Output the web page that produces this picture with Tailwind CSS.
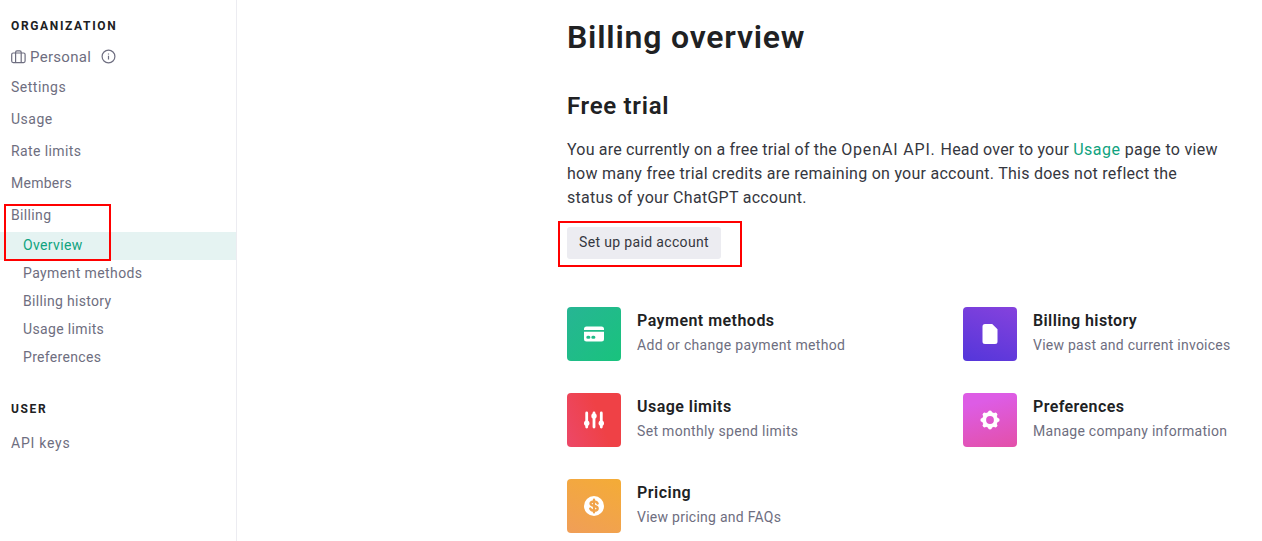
<!DOCTYPE html>
<html lang="en">
<head>
<meta charset="utf-8">
<title>Billing overview</title>
<script src="https://cdn.jsdelivr.net/npm/@tailwindcss/browser@4"></script>
</head>
<body class="relative flex h-[541px] w-[1262px] overflow-hidden bg-white font-['Roboto',sans-serif] text-[#353740]">
  <nav class="h-full w-[237px] shrink-0 border-r border-[#ececf1] pt-[17px] text-sm text-[#6e6e80]">
    <h3 class="pl-[11px] text-xs leading-[18px] font-bold tracking-[1.65px] text-[#202123]">ORGANIZATION</h3>
    <div class="mt-3 flex h-5 items-center pl-[11px] text-[15px]">
      <svg class="-mt-0.5 size-[15px]" viewBox="0 0 15 15" fill="none" stroke="currentColor" stroke-width="1.2"><rect x=".7" y="4" width="13.4" height="9.6" rx="1.5"/><path d="M4.6 13.6V3.2q0-1.4 1.4-1.4h2.8q1.4 0 1.4 1.4v10.4"/></svg>
      <span class="mt-0.5 ml-1 tracking-[0.3px]">Personal</span>
      <svg class="-mt-0.5 ml-[10px] size-[15px]" viewBox="0 0 15 15" fill="none" stroke="currentColor" stroke-width="1.2"><circle cx="7.5" cy="7.5" r="6.4"/><path d="M7.5 6.8v3.6M7.5 4.4v1.2"/></svg>
    </div>
    <ul class="mt-1 pl-[11px] leading-8">
      <li class="tracking-[0.5px]">Settings</li>
      <li class="tracking-[0.5px]">Usage</li>
      <li class="tracking-[0.4px]">Rate limits</li>
      <li class="tracking-[0.25px]">Members</li>
      <li class="tracking-[0.35px]">Billing</li>
    </ul>
    <ul class="mt-px leading-[26px]">
      <li class="bg-[#e5f3f2] pb-0.5 pl-[23px] tracking-[0.35px] text-[#10a37f]">Overview</li>
      <li class="pb-0.5 pl-[23px] tracking-[0.4px]">Payment methods</li>
      <li class="pb-0.5 pl-[23px] tracking-[0.32px]">Billing history</li>
      <li class="pb-0.5 pl-[23px] tracking-[0.35px]">Usage limits</li>
      <li class="pb-0.5 pl-[23px] tracking-[0.32px]">Preferences</li>
    </ul>
    <h3 class="mt-7 pl-[11px] text-xs leading-[18px] font-bold tracking-[1.65px] text-[#202123]">USER</h3>
    <div class="mt-[9px] pl-[11px] leading-8 tracking-[0.75px]">API keys</div>
  </nav>

  <main class="ml-[330px] w-[695px] shrink-0 pt-[17px]">
    <h1 class="text-[32px] leading-10 font-semibold tracking-[0.8px] text-[#202123]">Billing overview</h1>
    <h2 class="mt-[33px] text-2xl leading-8 font-semibold tracking-[0.7px] text-[#202123]">Free trial</h2>
    <p class="mt-4 text-base leading-6 whitespace-nowrap"><span class="tracking-[0.2px]">You are currently on a free trial of the </span><span class="tracking-[0.85px]">OpenAI API. </span><span class="tracking-[0.2px]">Head over to your </span><a class="tracking-[0.5px] text-[#10a37f]">Usage</a><span class="tracking-[0.3px]"> page to view</span><br><span class="tracking-[0.26px]">how many free trial credits are remaining on your account. This does not reflect the</span><br><span class="tracking-[0.28px]">status of your ChatGPT account.</span></p>
    <button class="mt-[17px] flex h-8 w-[154px] items-center justify-center rounded-[3px] bg-[#ececf1] pb-0.5 text-sm tracking-[0.35px]">Set up paid account</button>

    <div class="mt-12 grid grid-cols-[396px_299px] gap-y-8">
      <section class="flex h-[54px] gap-4">
        <div class="flex size-[54px] items-center justify-center rounded bg-linear-[135deg,#27b594,#19c37d]">
          <svg class="size-5" viewBox="0 0 20 20" fill="#fff"><path d="M0 5a2.5 2.5 0 0 1 2.5-2.5h15A2.5 2.5 0 0 1 20 5v.9H0zM0 7.7h20V15a2.5 2.5 0 0 1-2.5 2.5h-15A2.5 2.5 0 0 1 0 15zm3.8 4.1a1.5 1.5 0 0 0 0 3h1.1a1.5 1.5 0 0 0 0-3zm5 0a1.5 1.5 0 0 0 0 3h1.1a1.5 1.5 0 0 0 0-3z"/></svg>
        </div>
        <div><h4 class="mt-0.5 leading-6 font-semibold tracking-[0.47px] text-[#202123]">Payment methods</h4><p class="text-sm leading-6 tracking-[0.33px] text-[#6e6e80]">Add or change payment method</p></div>
      </section>
      <section class="flex h-[54px] gap-4">
        <div class="flex size-[54px] items-center justify-center rounded bg-linear-[200deg,#8542dd,#5436da]">
          <svg class="size-5" viewBox="0 0 20 20" fill="#fff"><path d="M5 0h7.2l5.3 5.3V17.5a2.5 2.5 0 0 1-2.5 2.5H5a2.5 2.5 0 0 1-2.5-2.5v-15A2.5 2.5 0 0 1 5 0z"/></svg>
        </div>
        <div><h4 class="mt-0.5 leading-6 font-semibold tracking-[0.4px] text-[#202123]">Billing history</h4><p class="text-sm leading-6 tracking-[0.25px] text-[#6e6e80]">View past and current invoices</p></div>
      </section>
      <section class="flex h-[54px] gap-4">
        <div class="flex size-[54px] items-center justify-center rounded bg-linear-[70deg,#ec4868,#ef4146_60%]">
          <svg class="size-5" viewBox="0 0 20 20" fill="#fff" stroke="#fff" stroke-width="2.8" stroke-linecap="round"><path d="M2.7 3v14M10 3v14M17.3 3v14"/><g stroke="none"><circle cx="2.7" cy="13.2" r="2.7"/><circle cx="10" cy="6" r="2.7"/><circle cx="17.3" cy="13.2" r="2.7"/></g></svg>
        </div>
        <div><h4 class="mt-0.5 leading-6 font-semibold tracking-[0.47px] text-[#202123]">Usage limits</h4><p class="text-sm leading-6 tracking-[0.33px] text-[#6e6e80]">Set monthly spend limits</p></div>
      </section>
      <section class="flex h-[54px] gap-4">
        <div class="flex size-[54px] items-center justify-center rounded bg-linear-[165deg,#dd5ce5_20%,#e350a8]">
          <svg class="size-5" viewBox="0 0 20 20" fill="none" stroke="#fff"><circle cx="10" cy="10" r="5.9" stroke-width="4"/><g stroke-width="4" stroke-linecap="round"><path d="M10 2.4v.5M10 17.1v.5M2.4 10h.5M17.1 10h.5M4.6 4.6l.4.4M15 15l.4.4M15.4 4.6l-.4.4M5 15l-.4.4"/></g></svg>
        </div>
        <div><h4 class="mt-0.5 leading-6 font-semibold tracking-[0.4px] text-[#202123]">Preferences</h4><p class="text-sm leading-6 tracking-[0.27px] text-[#6e6e80]">Manage company information</p></div>
      </section>
      <section class="flex h-[54px] gap-4">
        <div class="flex size-[54px] items-center justify-center rounded bg-linear-[25deg,#f09e58,#f4ac36]">
          <svg class="size-5" viewBox="0 0 20 20" fill="none"><circle cx="10" cy="10" r="10" fill="#fff"/><path d="M13.6 7.5C13 6 11.8 5.4 10 5.4c-2.1 0-3.5.8-3.5 2.2 0 3.4 7.2 1.4 7.2 4.8 0 1.4-1.5 2.3-3.7 2.3-1.9 0-3.2-.7-3.8-2.2M10 3.6v12.8" stroke="#f1a34a" stroke-width="2.3" stroke-linecap="round"/></svg>
        </div>
        <div><h4 class="mt-0.5 leading-6 font-semibold tracking-[0.5px] text-[#202123]">Pricing</h4><p class="text-sm leading-6 tracking-[0.26px] text-[#6e6e80]">View pricing and FAQs</p></div>
      </section>
    </div>
  </main>

  <div class="absolute top-[204px] left-1 h-[57px] w-[107px] border-2 border-[#f00]"></div>
  <div class="absolute top-[221px] left-[558px] h-[46px] w-[184px] border-2 border-[#f00]"></div>
</body>
</html>
